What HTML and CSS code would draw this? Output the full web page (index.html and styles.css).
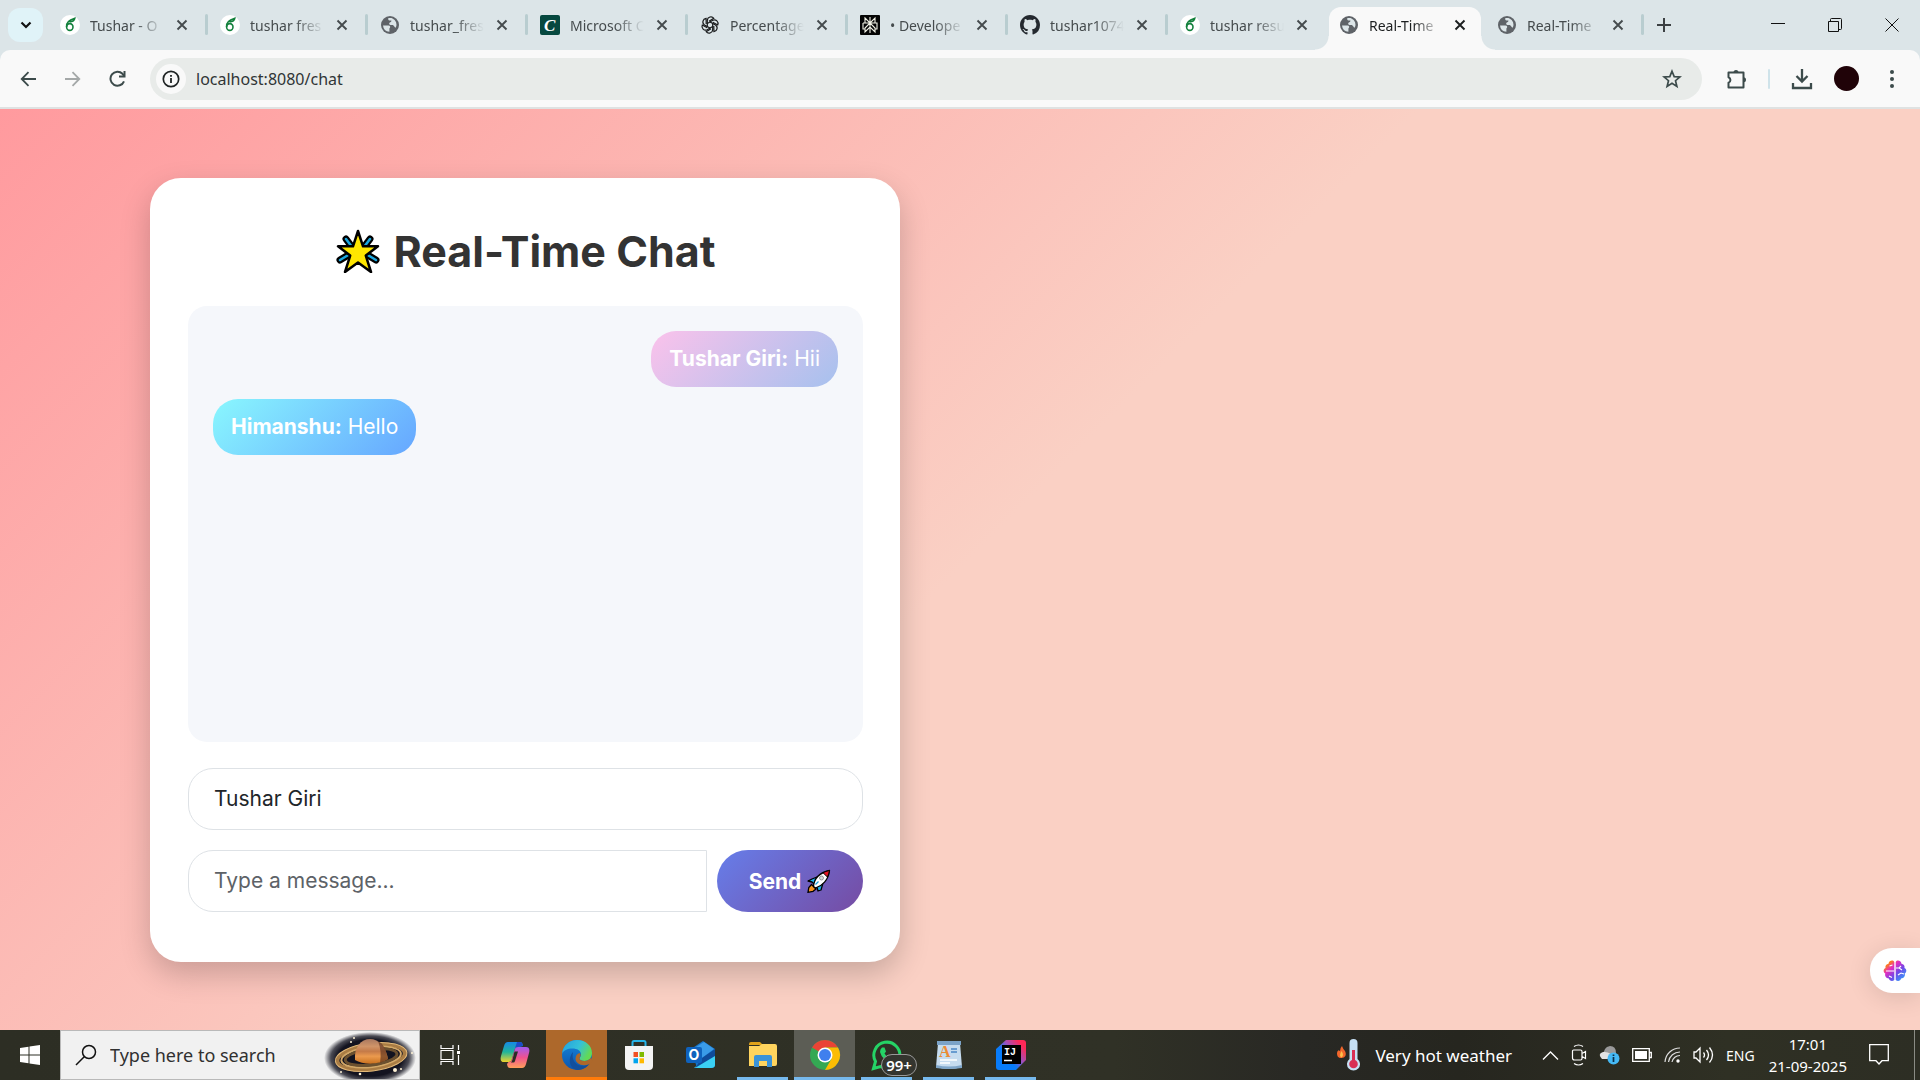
FILE: index.html
```html
<!DOCTYPE html>
<html lang="en">
<head>
<meta charset="utf-8">
<title>Real-Time Chat</title>
<link rel="stylesheet" href="styles.css">
</head>
<body>
<svg class="defs" aria-hidden="true">
  <symbol id="close" viewBox="0 0 12 12"><path d="M1.500 1.500l9 9M10.500 1.500l-9 9" fill="none" stroke="currentColor" stroke-width="1.900"/></symbol>
  <symbol id="overleaf" viewBox="0 0 20 20"><circle cx="10" cy="10" r="10" fill="#fff"/><ellipse cx="9.800" cy="12" rx="3.200" ry="3.400" fill="none" stroke="#13803c" stroke-width="1.600"/><path d="M6.600 12C6 8 8.500 5 14.800 3.200C14.500 5.500 12 6.800 9.500 7" fill="none" stroke="#13803c" stroke-width="1.600"/></symbol>
  <symbol id="globe" viewBox="0 0 20 20"><circle cx="10" cy="10" r="9" fill="#5f6368"/><path d="M3 10.500h5.500c1.800 0 2.300 2 .9 2.900v3.400A7 7 0 0 1 3 10.500zM8 3.400c.2 1.900 1.600 2.500 3.400 2.100c.1 2-2.200 1.700-2.200 3.200c0 1.200 1.400 1.300 3 1.200c2 0 2 2.600 3.700 2.700A7 7 0 0 0 12.500 3.400C11 2.800 9.400 2.900 8 3.400z" fill="#dce5e8"/></symbol>
  <symbol id="openai" viewBox="0 0 20 20"><g fill="none" stroke="#17191a" stroke-width="1.200"><path id="petal" d="M7.300 11.500V5.200A3.600 3.600 0 0 1 13.800 3.300L9 6.200"/><use href="#petal" transform="rotate(60 10 10)"/><use href="#petal" transform="rotate(120 10 10)"/><use href="#petal" transform="rotate(180 10 10)"/><use href="#petal" transform="rotate(240 10 10)"/><use href="#petal" transform="rotate(300 10 10)"/></g></symbol>
  <symbol id="perplexity" viewBox="0 0 20 20"><rect width="20" height="20" rx="1" fill="#050505"/><path d="M10 2v16M5 3l5 5 5-5v5H5zM3 8h4l3 0-5 5v4l5-5 5 5v-4l-5-5h7v6h-2M3 8v6h2" fill="none" stroke="#f2f2e6" stroke-width="1.100"/></symbol>
  <symbol id="github" viewBox="0 0 16 16"><path fill="#24292f" d="M8 0C3.580 0 0 3.580 0 8c0 3.540 2.290 6.530 5.470 7.590.4.070.55-.17.55-.38 0-.19-.01-.82-.01-1.490-2.010.37-2.530-.49-2.690-.94-.09-.23-.48-.94-.82-1.130-.28-.15-.68-.52-.01-.53.63-.01 1.080.58 1.230.82.720 1.210 1.870.87 2.330.66.070-.52.28-.87.51-1.070-1.780-.2-3.640-.89-3.640-3.950 0-.87.31-1.590.82-2.150-.08-.2-.36-1.020.08-2.120 0 0 .67-.21 2.200.82.640-.18 1.320-.27 2-.27s1.360.09 2 .27c1.530-1.040 2.200-.82 2.200-.82.440 1.100.16 1.920.08 2.120.51.56.82 1.270.82 2.150 0 3.070-1.870 3.750-3.650 3.950.29.25.54.73.54 1.480 0 1.070-.01 1.930-.01 2.200 0 .21.15.46.55.38A8.010 8.010 0 0 0 16 8c0-4.420-3.580-8-8-8z"/></symbol>
</svg>

<header class="browser">
  <nav class="tabstrip" aria-label="Tabs">
    <button class="tab-search" aria-label="Search tabs"><svg width="12" height="8" viewBox="0 0 12 8"><path d="M1.500 1.500L6 6l4.500-4.500" fill="none" stroke="#111" stroke-width="2.200"/></svg></button>
    <div class="tab"><svg class="favicon"><use href="#overleaf"/></svg><a href="#t1">Tushar - O</a><button aria-label="Close tab"><svg><use href="#close"/></svg></button></div>
    <div class="tab"><svg class="favicon"><use href="#overleaf"/></svg><a href="#t2">tushar fres</a><button aria-label="Close tab"><svg><use href="#close"/></svg></button></div>
    <div class="tab"><svg class="favicon"><use href="#globe"/></svg><a href="#t3">tushar_fres</a><button aria-label="Close tab"><svg><use href="#close"/></svg></button></div>
    <div class="tab"><svg class="favicon" viewBox="0 0 20 20"><rect width="20" height="20" rx="2" fill="#06483f"/><text x="4" y="16" class="c-letter">C</text></svg><a href="#t4">Microsoft C</a><button aria-label="Close tab"><svg><use href="#close"/></svg></button></div>
    <div class="tab"><svg class="favicon"><use href="#openai"/></svg><a href="#t5">Percentage</a><button aria-label="Close tab"><svg><use href="#close"/></svg></button></div>
    <div class="tab"><svg class="favicon"><use href="#perplexity"/></svg><a href="#t6">• Develope</a><button aria-label="Close tab"><svg><use href="#close"/></svg></button></div>
    <div class="tab"><svg class="favicon"><use href="#github"/></svg><a href="#t7">tushar1074</a><button aria-label="Close tab"><svg><use href="#close"/></svg></button></div>
    <div class="tab no-sep"><svg class="favicon"><use href="#overleaf"/></svg><a href="#t8">tushar resu</a><button aria-label="Close tab"><svg><use href="#close"/></svg></button></div>
    <div class="tab active"><svg class="favicon"><use href="#globe"/></svg><a href="#t9">Real-Time</a><button aria-label="Close tab"><svg><use href="#close"/></svg></button></div>
    <div class="tab last"><svg class="favicon"><use href="#globe"/></svg><a href="#t10">Real-Time</a><button aria-label="Close tab"><svg><use href="#close"/></svg></button></div>
    <button class="new-tab" aria-label="New tab"><svg width="14" height="14" viewBox="0 0 14 14"><path d="M7 0v14M0 7h14" stroke="#3c4043" stroke-width="2"/></svg></button>
    <div class="window-controls">
      <button aria-label="Minimize"><svg width="14" height="14" viewBox="0 0 14 14"><path d="M0 5.500h14" stroke="#111"/></svg></button>
      <button aria-label="Restore"><svg width="14" height="14" viewBox="0 0 14 14"><path d="M.5 3.500h10v10H.5zM2.500 3.500v-2q0-1 1-1h9q1 0 1 1v9q0 1-1 1h-2" fill="none" stroke="#111"/></svg></button>
      <button aria-label="Close window"><svg width="14" height="14" viewBox="0 0 14 14"><path d="M.5.5l13 13M13.500.5l-13 13" stroke="#111"/></svg></button>
    </div>
  </nav>
  <div class="toolbar">
    <button aria-label="Back"><svg width="16" height="16" viewBox="0 0 16 16"><path d="M16 8H2M8.500 1.200L1.700 8l6.800 6.800" fill="none" stroke="#3c4b4b" stroke-width="1.800"/></svg></button>
    <button aria-label="Forward"><svg width="16" height="16" viewBox="0 0 16 16"><path d="M0 8h14M7.500 1.200L14.300 8l-6.800 6.800" fill="none" stroke="#a4a8a8" stroke-width="1.800"/></svg></button>
    <button aria-label="Reload"><svg width="17" height="17" viewBox="0 0 17 17"><path d="M15 11.300A7 7 0 1 1 13.500 3.800L15.300 6" fill="none" stroke="#3c4b4b" stroke-width="2"/><path d="M16.500 1v6.500H10V5.500h4.500V1z" fill="#3c4b4b"/></svg></button>
    <div class="omnibox">
      <button class="site-info" aria-label="Site information"><svg width="18" height="18" viewBox="0 0 18 18"><circle cx="9" cy="9" r="7.700" fill="none" stroke="#1f2424" stroke-width="1.700"/><path d="M9 8v5M9 5v1.800" stroke="#1f2424" stroke-width="1.800"/></svg></button>
      <input type="text" aria-label="Address" value="localhost:8080/chat">
      <button class="star" aria-label="Bookmark"><svg width="20" height="20" viewBox="0 0 20 20"><path d="M10 2.200l2.200 5.400 5.700.4-4.400 3.700 1.400 5.700-4.900-3.100-4.900 3.100 1.400-5.700L2.100 8l5.700-.4z" fill="none" stroke="#3c4b4b" stroke-width="1.700"/></svg></button>
    </div>
    <button aria-label="Extensions"><svg width="22" height="22" viewBox="0 0 22 22"><path d="M2.500 4.500h15v15h-15v-4.700a3 3 0 0 0 0-5.600z" fill="none" stroke="#3c4b4b" stroke-width="2" stroke-linejoin="round"/><path d="M7.500 4.500a2.500 2.500 0 0 1 5 0zM17.500 9.300a2.500 2.500 0 0 1 0 5z" fill="#3c4b4b"/></svg></button>
    <span class="divider"></span>
    <button aria-label="Downloads"><svg width="22" height="22" viewBox="0 0 22 22"><path d="M11 1v12M5.500 8L11 13.500 16.500 8M2 15v5h18v-5" fill="none" stroke="#3c4b4b" stroke-width="2.300"/></svg></button>
    <button aria-label="Profile"><span class="avatar"></span></button>
    <button aria-label="Menu"><svg width="4" height="18" viewBox="0 0 4 18"><g fill="#3c4b4b"><circle cx="2" cy="2" r="2"/><circle cx="2" cy="9" r="2"/><circle cx="2" cy="16" r="2"/></g></svg></button>
  </div>
</header>

<main class="page">
  <section class="card">
    <h1><svg width="44" height="44" viewBox="0 0 44 44" aria-hidden="true"><g stroke-linecap="round"><path d="M10 10l6 8M34 10l-6 8M4 31l10-6M40 31l-10-6" stroke="#000" stroke-width="7"/><path d="M10 10l6 8M34 10l-6 8M4 31l10-6M40 31l-10-6" stroke="#1ba8e0" stroke-width="2.500"/></g><path d="M22 2l5 15.300h15L29.800 26.600l5.200 16.400L22 33.500 9 43l5.200-16.400L2 17.300h15z" fill="#ffe600" stroke="#000" stroke-width="2.500" stroke-linejoin="round"/></svg>Real-Time Chat</h1>
    <div class="messages">
      <p class="bubble mine"><strong>Tushar Giri:</strong> Hii</p>
      <p class="bubble theirs"><strong>Himanshu:</strong> Hello</p>
    </div>
    <input class="field" type="text" aria-label="Your name" value="Tushar Giri">
    <form class="composer">
      <input class="field" type="text" aria-label="Message" placeholder="Type a message...">
      <button class="send" type="button">Send <svg width="24" height="24" viewBox="0 0 24 24" aria-hidden="true"><path d="M5 10l5-2 6 6-2 7-3 1-1-4-5-5-4-1z" fill="#1bb4f0" stroke="#000" stroke-width="1.300" stroke-linejoin="round"/><path d="M4.500 15.500L9 20l-3 2.300L1 23.300l.8-4.800z" fill="#f7931e" stroke="#000" stroke-width="1.300"/><path d="M6.500 17.500C7 10 11.500 4 22.500 1.500 21.500 11 15 17 8.500 19z" fill="#fff" stroke="#000" stroke-width="1.300" stroke-linejoin="round"/><path d="M16 3.700c2-1 4-1.700 6.500-2.200C22 4 21.300 6 20.400 8z" fill="#e81224" stroke="#000"/><circle cx="14.500" cy="9" r="2" fill="#d5d9dc" stroke="#777" stroke-width=".7"/><path d="M8.500 15.500l3-3" stroke="#1b9ad6" stroke-width="1.200"/></svg></button>
    </form>
  </section>
  <button class="assistant" aria-label="Assistant"><svg width="24" height="24" viewBox="0 0 24 24"><defs><linearGradient id="brain" x1="0" y1="0" x2="1" y2="1"><stop offset="0" stop-color="#ff8a00"/><stop offset=".15" stop-color="#ff8a00"/><stop offset=".35" stop-color="#e62cc0"/><stop offset=".6" stop-color="#7048e8"/><stop offset="1" stop-color="#22b8ff"/></linearGradient></defs><path d="M11.300 3v18c-2 2-5 .8-5.400-1.500C3 19.500 1.500 17 2.300 14.600 0 13 .2 10 2.500 9 2 6.500 3.500 5 5.500 4.700 6 1.500 10 .5 11.300 3zM12.700 3v18c2 2 5 .8 5.400-1.500 2.900 0 4.400-2.500 3.600-4.900 2.300-1.600 2.100-4.600-.2-5.600.5-2.500-1-4-3-4.300C18 1.500 14 .5 12.700 3z" fill="url(#brain)"/><path d="M3 12h8M6.500 7l3-1M6 17l3 1.500M13 9h3l2-2M16 9l3 2M15 16l3-2 3 1" fill="none" stroke="#fff" stroke-width="1.100"/></svg></button>
</main>

<footer class="taskbar">
  <button class="start" aria-label="Start"><svg width="20" height="20" viewBox="0 0 20 20"><path d="M0 2.900l8.500-1.200v7.800H0zM9.500 1.500L20 0v9.500H9.500zM0 10.500h8.500v7.800L0 17.100zM9.500 10.500H20V20L9.500 18.500z" fill="#fff"/></svg></button>
  <label class="search">
    <svg width="22" height="22" viewBox="0 0 22 22"><circle cx="14" cy="8" r="6.500" fill="none" stroke="#111" stroke-width="1.500"/><path d="M9.200 12.800L1 21" stroke="#111" stroke-width="1.500"/></svg>
    <input type="text" aria-label="Search" placeholder="Type here to search">
    <svg width="92" height="48" viewBox="0 0 92 48"><defs>
      <radialGradient id="sky"><stop offset=".7" stop-color="#13131f"/><stop offset=".85" stop-color="#13131f" stop-opacity=".75"/><stop offset="1" stop-color="#13131f" stop-opacity="0"/></radialGradient>
      <linearGradient id="ball" x2="0" y2="1"><stop offset="0" stop-color="#a87860"/><stop offset=".3" stop-color="#d09468"/><stop offset=".5" stop-color="#c47a48"/><stop offset=".7" stop-color="#eb9a4e"/><stop offset="1" stop-color="#c9711f"/></linearGradient></defs>
      <ellipse cx="46" cy="27" rx="46" ry="26" fill="url(#sky)"/>
      <g transform="rotate(-7 47 25)" fill="none"><ellipse cx="47" cy="26" rx="34" ry="12" stroke="#a97c44" stroke-width="4"/><ellipse cx="47" cy="26" rx="36" ry="14" stroke="#e2b878"/><ellipse cx="47" cy="26" rx="30" ry="10" stroke="#d2a767" stroke-width="2"/><ellipse cx="47" cy="26" rx="26" ry="8" stroke="#6b502f" stroke-width="3"/></g>
      <path d="M31 29C30 16 37 8 46 8s16 8 18 20c-9 6-25 6-33 1z" fill="url(#ball)"/><path d="M54 10c6 3 8 9 10 18l-8 4q2-12-2-22z" fill="#5d321d" opacity=".65"/>
      <g fill="#fff3d6"><circle cx="30" cy="7" r="1"/><circle cx="27" cy="11" r="1"/><circle cx="71" cy="39" r="2"/><circle cx="77" cy="38" r="1"/><circle cx="36" cy="43" r="1.300"/><circle cx="17" cy="41" r="1"/><circle cx="88" cy="22" r="1"/></g></svg>
  </label>
  <div class="apps">
    <button class="task-view" aria-label="Task View"><svg width="20" height="20" viewBox="0 0 20 20"><path d="M1 0v3.500h12V0M1 20v-3.500h12V20M1 5.500h12v9H1zM18.500 0v5M18.500 10v10" fill="none" stroke="#fff" stroke-width="1.200"/><path d="M17 6h3v3h-3z" fill="#fff"/></svg></button>
    <button aria-label="Copilot"><svg width="30" height="30" viewBox="0 0 30 30"><defs><linearGradient id="cpA" x2="0" y2="1"><stop offset="0" stop-color="#1688e8"/><stop offset=".5" stop-color="#20b49a"/><stop offset="1" stop-color="#f0d32c"/></linearGradient><linearGradient id="cpB" x2="0" y2="1"><stop offset="0" stop-color="#a25bf0"/><stop offset=".5" stop-color="#f05290"/><stop offset="1" stop-color="#ffa05a"/></linearGradient></defs><path d="M8 2h12c2 0 2.500 1.500 3 4l-5 1c-2 0-3 1-3.500 3L12 19c-.5 2-1.500 3-3.500 3H4c-3 0-4-2-3-6L4 6c.7-2.500 2-4 4-4z" fill="url(#cpA)"/><path d="M17 2h3c2 0 2.500 1.500 3 4l-5 1q-2 0-3 1z" fill="#1c4bc9"/><path d="M22 28H10c-2 0-2.500-1.500-3-4l1.500-2c2 0 3-1 3.500-3l2.500-9c.5-2 1.500-3 3.500-3H26c3 0 4 2 3 6l-3 11c-.7 2.500-2 4-4 4z" fill="url(#cpB)"/><path d="M14.500 11.500h3.500L15 21q-.5 1.500-1.500 1.500h-2.500q1-1 1.500-3z" fill="#2b2d25"/></svg></button>
    <button class="alert" aria-label="Edge"><svg width="32" height="32" viewBox="0 0 32 32"><defs><linearGradient id="edA" x2="1" y2=".4"><stop offset="0" stop-color="#249fe0"/><stop offset=".6" stop-color="#35c1d8"/><stop offset="1" stop-color="#62d957"/></linearGradient><linearGradient id="edB" x2="0" y2="1"><stop offset="0" stop-color="#1686dc"/><stop offset="1" stop-color="#0b55ae"/></linearGradient></defs><circle cx="16" cy="16" r="15" fill="url(#edB)"/><path d="M1 15C2 6 8.500 1 16 1c9 0 15 6 15 13 0 5-3.500 8-7.500 8-3 0-5-1-5-2.500 0-1 1.500-1.700 1.500-4C20 11.500 16 9.500 11.500 9.500 6.500 9.500 2 11.500 1 15z" fill="url(#edA)"/><path d="M12 13c-2 8 3 14 10 14 3 0 5-1 7-3-2.500 4-7 7-12 7C9 30.500 6 20 12 13z" fill="#124f9c"/><path d="M18.500 19.500c0 1.500 2 2.500 5 2.500 3 0 5-1.500 6.500-3.500l1.500 4-3 2.500c-7 3-14 0-14-5.500 0-3 2-5 4-5.500 2.500 2 0 4 0 5.500z" fill="#ad682b"/></svg></button>
    <button aria-label="Store"><svg width="30" height="32" viewBox="0 0 30 32"><path d="M8.500 9V3.500Q8.500 2 10 2h10q1.500 0 1.500 1.500V9" fill="none" stroke="#28b4e8" stroke-width="2"/><path d="M1 7h28v20q0 4-4 4H5q-4 0-4-4z" fill="#f4f4f4"/><path d="M9.500 13H14v5H9.500z" fill="#f25022"/><path d="M15.500 13H20v5h-4.500z" fill="#7fba00"/><path d="M9.500 19.300H14v5H9.500z" fill="#00a4ef"/><path d="M15.500 19.300H20v5h-4.500z" fill="#ffb900"/></svg></button>
    <button aria-label="Outlook"><svg width="30" height="30" viewBox="0 0 30 30"><path d="M5 9L17 1l12 8v15q0 4-4 4H11z" fill="#1673c8"/><path d="M10 7l8-5 10 7-12 9z" fill="#3a9be8"/><path d="M29 10v15q0 3-4 3H8z" fill="#3ad0f4"/><path d="M16 18L29 9v7L9 28z" fill="#0f4b9a"/><rect y="7" width="16" height="16" rx="2" fill="#0f62bd"/><text x="8" y="20" text-anchor="middle" class="o-letter">O</text></svg></button>
    <button class="open" aria-label="File Explorer"><svg width="28" height="28" viewBox="0 0 28 28"><path d="M0 3q0-2 2-2h9l3 3H0z" fill="#e0a21a"/><path d="M0 5h10l3-2h13q2 0 2 2v18q0 2-2 2H0z" fill="#ffd45e"/><path d="M5 26V16q0-2 2-2h14q2 0 2 2v10h-5v-6h-8v6z" fill="#3b93d8"/></svg></button>
    <button class="current" aria-label="Chrome"><svg width="32" height="32" viewBox="0 0 32 32"><circle cx="16" cy="16" r="15" fill="#34a853"/><path d="M16 16L3 8.500A15 15 0 0 1 29 8.500H16z" fill="#ea4335"/><path d="M16 8.500h13A15 15 0 0 1 16 31l6.500-11.300z" fill="#fbbc04"/><circle cx="16" cy="16" r="7.500" fill="#fff"/><circle cx="16" cy="16" r="6" fill="#3f7fee"/></svg></button>
    <button class="open" aria-label="WhatsApp"><svg width="32" height="32" viewBox="0 0 32 32"><path d="M2.500 29.500l2-7A13 13 0 1 1 9.500 27.500z" fill="none" stroke="#25d366" stroke-width="3"/><path d="M11 8.500l2.500 0 1.500 4-1.500 2q1.500 3 5 4.500l2-2 4 2q0 4-4 4-9-1-11.500-10 0-3 2-4.500z" fill="#25d366"/></svg><span class="badge">99+</span></button>
    <button class="open" aria-label="WordPad"><svg width="26" height="30" viewBox="0 0 26 30"><path d="M2 3h22l2 24q-13 4-26 0z" fill="#c6dcef"/><path d="M1 1h24v4H1z" fill="#7ba3c8"/><path d="M0 25q13 3 26 0v3q-13 2-26 0z" fill="#7fa6c9"/><text x="3" y="17" class="a-letter">A</text><path d="M15 9h6M15 12h6" stroke="#4b86c6" stroke-width="1.300"/><path d="M4 20h17M4 23h10" stroke="#fff" stroke-width="1.500"/></svg></button>
    <button class="open" aria-label="IntelliJ IDEA"><svg width="30" height="30" viewBox="0 0 30 30"><defs><linearGradient id="ij" x1=".2" y1=".8" x2=".9" y2=".2"><stop offset=".3" stop-color="#087cfa"/><stop offset=".6" stop-color="#9b51c0"/><stop offset="1" stop-color="#fe2857"/></linearGradient></defs><path d="M10 0h17q3 0 3 3v17L20 30H3q-3 0-3-3V9z" fill="url(#ij)"/><rect x="6" y="5" width="19" height="19" fill="#000"/><text x="8" y="15" class="ij-letters">IJ</text><path d="M8 20.500h8" stroke="#fff" stroke-width="1.500"/></svg></button>
  </div>
  <div class="tray">
    <button class="weather"><svg width="23" height="32" viewBox="0 0 23 32"><path d="M5 7q1 3 3 5c2 4 0 7-3.500 7S0 17 0 14q0-2 2-3 0 1 1 1 0-3 2-5z" fill="#f2662b"/><path d="M4.500 12q3 4 0 6.500Q1.500 17 4.500 12z" fill="#ffc04a"/><path d="M12.500 4a4 4 0 0 1 8 0v16a6.500 6.500 0 1 1-8 0z" fill="#c7e0f5"/><path d="M15 11h3v10h-3z" fill="#d92f55"/><circle cx="16.500" cy="25" r="4.300" fill="#d92f55"/></svg>Very hot weather</button>
    <div class="icons">
      <button aria-label="Show hidden icons"><svg width="17" height="12" viewBox="0 0 17 12"><path d="M1 10.500L8.500 3l7.500 7.500" fill="none" stroke="#fff" stroke-width="1.300"/></svg></button>
      <button aria-label="Meet now"><svg width="16" height="22" viewBox="0 0 16 22"><path d="M3 2.500q4.500-3 9 0M3 19.500q4.500 3 9 0M1.500 7q0-1 1-1h7q1.500 0 1.500 1.500v7q0 1.500-1.500 1.500h-6q-2 0-2-2zM11 9.500l3.500-2v7l-3.500-2" fill="none" stroke="#fff" stroke-width="1.200"/></svg></button>
      <button aria-label="OneDrive"><svg width="21" height="20" viewBox="0 0 21 20"><path d="M4 12Q4 2 11 1q6 0 6 7v5z" fill="#9a9a9a"/><path d="M3 14q-5-5 1-7 8-1 11 7z" fill="#e2e2e2"/><circle cx="14.500" cy="13.500" r="6" fill="#45b9f5"/><path d="M14.500 12v5M14.500 9.500v1.500" stroke="#0b2f4a" stroke-width="1.700"/></svg></button>
      <button aria-label="Battery"><svg width="20" height="14" viewBox="0 0 20 14"><path d="M.7.7h16.600v12.600H.7zM17.300 4.500h2v5h-2" fill="none" stroke="#fff" stroke-width="1.300"/><path d="M3 3h12v8H3z" fill="#fff"/></svg></button>
      <button aria-label="Wi-Fi"><svg width="17" height="18" viewBox="0 0 17 18"><g fill="none" stroke="#ddd" stroke-width="1.200"><path d="M1 16A15 15 0 0 1 16 2"/><path d="M4.500 16A11.500 11.500 0 0 1 16 6"/><path d="M8 16a8 8 0 0 1 8-6.500"/></g><circle cx="14" cy="15" r="1.700" fill="#fff"/></svg></button>
      <button aria-label="Volume"><svg width="21" height="20" viewBox="0 0 21 20"><path d="M1 7h2l4-4v14l-4-4H1zM10.500 7.500q2 2.500 0 5M13.500 5q4 5 0 10M16.500 2.500q6 7.500 0 15" fill="none" stroke="#fff" stroke-width="1.300"/></svg></button>
      <button>ENG</button>
    </div>
    <button class="clock"><time>17:01</time><time>21-09-2025</time></button>
    <button aria-label="Notifications"><svg width="20" height="22" viewBox="0 0 20 22"><path d="M.7.7h18.600v16H13L10 20l-3-3.300H.7z" fill="none" stroke="#fff" stroke-width="1.300"/></svg></button>
    <button class="show-desktop" aria-label="Show desktop"></button>
  </div>
</footer>
</body>
</html>
```
FILE: styles.css
```css
* { box-sizing: border-box; }

body {
  margin: 0;
  min-height: 100vh;
  display: flex;
  flex-direction: column;
  font-family: "Noto Sans", "Open Sans", sans-serif;
}

button {
  display: flex;
  align-items: center;
  justify-content: center;
  padding: 0;
  border: 0;
  background: none;
  color: inherit;
  font: inherit;
}

input { font: inherit; min-width: 0; }
svg { display: block; flex: none; }
.defs { position: absolute; width: 0; height: 0; }

/* Browser chrome */
.browser { background: #dce5e8; }

.tabstrip {
  display: flex;
  height: 50px;
  padding-left: 8px;
  font-size: 14px;
  color: #454b4d;
}

.tab-search {
  width: 35px;
  height: 34px;
  margin: 8px 5px 0 0;
  border-radius: 12px;
  background: #e0f3f8;
}

.tab {
  position: relative;
  display: flex;
  align-items: center;
  flex: 0 1 160px;
  min-width: 0;
  padding-left: 12px;
}

.tab::after {
  content: "";
  position: absolute;
  right: 0;
  top: 14px;
  width: 3px;
  height: 21px;
  border-radius: 2px;
  background: #b9cdd0;
}

.tab.no-sep::after { display: none; }
.favicon { width: 20px; height: 20px; }

.tab a {
  flex: 0 1 74px;
  min-width: 0;
  margin-left: 10px;
  overflow: hidden;
  white-space: nowrap;
  color: inherit;
  text-decoration: none;
  -webkit-mask-image: linear-gradient(90deg, #000 60%, transparent);
  mask-image: linear-gradient(90deg, #000 60%, transparent);
}

.tab button { width: 20px; height: 20px; margin-left: 8px; }
.tab button svg { width: 12px; height: 12px; }

.tab.active {
  flex-basis: 152px;
  margin: 7px 5px 0 1px;
  padding: 0 0 7px 10px;
  border-radius: 12px 12px 0 0;
  background: #f9f9f9;
  color: #1c1f20;
}

.tab.active a, .tab.last a { flex-basis: 73px; }
.tab.last { flex-basis: 158px; padding-left: 11px; }

.tab.active::before,
.tab.active::after {
  content: "";
  position: absolute;
  top: auto;
  bottom: 0;
  width: 14px;
  height: 14px;
  border-radius: 0;
}

.tab.active::before { left: -14px; background: radial-gradient(circle at 0 0, transparent 13px, #f9f9f9 14px); }
.tab.active::after { right: -14px; background: radial-gradient(circle at 100% 0, transparent 13px, #f9f9f9 14px); }

.c-letter { font: italic 700 17px "Liberation Serif", serif; fill: #fff; }
.new-tab { width: 40px; }
.window-controls { display: flex; margin-left: auto; }
.window-controls button { width: 57px; }

.toolbar {
  display: flex;
  align-items: center;
  height: 59px;
  padding: 0 6px 0 5px;
  border-bottom: 2px solid #dfe2e2;
  border-radius: 10px 10px 0 0;
  background: #f9f9f9;
}

.toolbar > button { width: 45px; height: 42px; }

.omnibox {
  display: flex;
  align-items: center;
  flex: 1;
  height: 42px;
  margin: 0 12px 0 10px;
  padding: 0 14px 0 6px;
  border-radius: 21px;
  background: #e8ebe9;
}

.site-info { width: 30px; height: 30px; border-radius: 15px; background: #f9f9f9; }

.omnibox input {
  flex: 1;
  height: 30px;
  padding: 0 0 0 10px;
  border: 0;
  background: none;
  font-size: 16px;
  color: #303536;
}

.star { width: 32px; }
.divider { width: 2px; height: 20px; margin: 0 9px; border-radius: 1px; background: #cfe3ea; }
.avatar { width: 25px; height: 25px; border-radius: 13px; background: #200308; }

/* Chat page */
.page {
  position: relative;
  flex: 1;
  padding: 69px 150px 68px;
  background: linear-gradient(135deg, #ff9a9e 0%, #fad0c4 50%);
  font-family: Inter, sans-serif;
  font-size: 21px;
}

.card {
  display: flex;
  flex-direction: column;
  max-width: 750px;
  padding: 38px 37px 50px 38px;
  border-radius: 31px;
  background: #fff;
  box-shadow: 0 12px 31px rgba(0, 0, 0, 0.2);
}

.card h1 {
  display: flex;
  align-items: center;
  justify-content: center;
  gap: 14px;
  margin: 0 0 20px;
  font-size: 43px;
  line-height: 70px;
  color: #333;
}

.messages {
  display: flex;
  flex-direction: column;
  gap: 12px;
  min-height: 436px;
  padding: 25px;
  border-radius: 19px;
  background: #f5f7fb;
}

.bubble {
  margin: 0;
  padding: 12px 18px;
  border-radius: 25px;
  color: #fff;
  line-height: 32px;
}

.mine { align-self: flex-end; background: linear-gradient(135deg, #fbc2eb, #a6c1ee); }
.theirs { align-self: flex-start; background: linear-gradient(135deg, #89f7fe, #66a6ff); }

.field {
  width: 100%;
  height: 62px;
  margin-top: 26px;
  padding: 0 25px 2px;
  border: 1px solid #dee2e6;
  border-radius: 25px;
  background: #fff;
  color: #212529;
}

.field::placeholder { color: #5d6267; opacity: 1; }
.composer { display: flex; gap: 10px; margin-top: 20px; }
.composer .field { flex: 1; margin: 0; border-radius: 25px 0 0 25px; }

.send {
  gap: 6px;
  width: 146px;
  border-radius: 31px;
  background: linear-gradient(135deg, #667eea, #764ba2);
  color: #fff;
  font-weight: 700;
}

.assistant {
  position: absolute;
  right: 0;
  bottom: 37px;
  width: 50px;
  height: 45px;
  border-radius: 22px 0 0 22px;
  background: #fff;
  box-shadow: 0 4px 24px rgba(0, 0, 0, 0.12);
}

/* Taskbar */
.taskbar {
  display: flex;
  height: 50px;
  background: linear-gradient(90deg, #2d2e24, #303126 58%, #282824 68%, #26261f 76%, #2f3024 90%, #2d2e24);
  color: #fff;
}

.start { width: 60px; }

.search {
  display: flex;
  align-items: center;
  width: 360px;
  padding: 0 3px 0 14px;
  border: 1px solid #b9b9b9;
  background: #f1f1f1;
}

.search input {
  flex: 1;
  padding: 0 0 0 13px;
  border: 0;
  background: none;
  font-size: 18px;
}

.search input::placeholder { color: #303030; opacity: 1; }

.apps { display: flex; gap: 1px; }
.apps button { position: relative; width: 61px; }
.apps .task-view { width: 63px; padding-right: 3px; }
.alert { background: #ad682b; box-shadow: inset 0 -3px #ff7b0a; }
.current { background: #5c5d55; box-shadow: inset 0 -3px #76b9ed; }

.open::after {
  content: "";
  position: absolute;
  left: 5px;
  right: 5px;
  bottom: 0;
  height: 3px;
  background: #76b9ed;
}

.badge {
  position: absolute;
  right: 0;
  top: 24px;
  z-index: 1;
  width: 36px;
  height: 22px;
  border: 1px solid #999;
  border-radius: 11px;
  background: #34352f;
  font-size: 15px;
  font-weight: 600;
  line-height: 20px;
  text-align: center;
}

.o-letter { font: 700 14px Inter, sans-serif; fill: #fff; }
.a-letter { font: 700 16px "Liberation Serif", serif; fill: #ec8b35; }
.ij-letters { font: 700 10px "Liberation Mono", monospace; fill: #fff; }

.tray { display: flex; margin-left: auto; font-size: 15px; }
.weather { gap: 15px; margin-right: 30px; font-size: 17px; }
.icons { display: flex; gap: 12px; font-size: 14px; }
.clock { flex-direction: column; gap: 2px; margin: 0 22px 0 14px; }
.clock time { line-height: 20px; }
.show-desktop { width: 6px; margin-left: 25px; border-left: 1px solid #8a8b84; }
```
